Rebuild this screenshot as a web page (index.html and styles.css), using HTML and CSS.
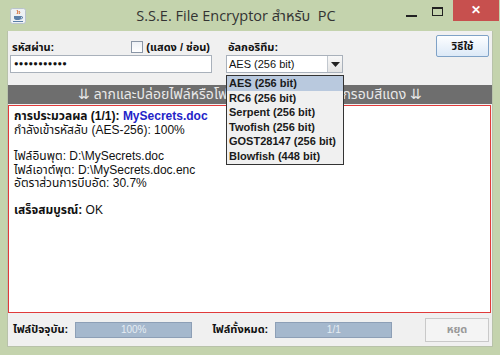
FILE: index.html
```html
<!DOCTYPE html>
<html lang="th">
<head>
  <meta charset="UTF-8">
  <meta name="viewport" content="width=device-width, initial-scale=1.0">
  <title>S.S.E. File Encryptor สำหรับ PC</title>
  <link rel="stylesheet" href="styles.css">
</head>
<body>
  <div class="window">
    <div class="titlebar">
      <div class="app-icon">
        <svg width="16" height="16" viewBox="0 0 16 16">
          <rect x="0.5" y="0.5" width="15" height="15" rx="2" fill="#eef1f4" stroke="#b9c3cc"/>
          <path d="M7 2 q2 2 0 4 M9 3 q1.5 1.5 0 3" stroke="#d2642a" stroke-width="1" fill="none"/>
          <path d="M4 8 h7 v2 q0 2 -3.5 2 q-3.5 0 -3.5 -2z" fill="#5b7fa8"/>
          <path d="M11 8.5 q2 0 1.5 1.5 q-0.5 1 -2 1" stroke="#5b7fa8" fill="none"/>
          <path d="M3 13.5 h10" stroke="#5b7fa8"/>
        </svg>
      </div>
      <div class="title">S.S.E. File Encryptor สำหรับ&nbsp; PC</div>
      <div class="controls">
        <span class="ctl-min"></span>
        <span class="ctl-max"></span>
        <span class="ctl-close">✕</span>
      </div>
    </div>

    <div class="content">
      <div class="top">
        <div class="pw-col">
          <div class="field-head">
            <span class="label">รหัสผ่าน:</span>
            <span class="show-toggle"><span class="checkbox"></span>(แสดง / ซ่อน)</span>
          </div>
          <div class="textbox">●●●●●●●●●●●</div>
        </div>

        <div class="algo-col">
          <div class="field-head">
            <span class="label">อัลกอริทึม:</span>
          </div>
          <div class="combo">
            <span class="combo-value">AES (256 bit)</span>
            <span class="combo-arrow">
              <svg width="9" height="5" viewBox="0 0 9 5"><path d="M0 0 h9 l-4.5 5z" fill="#222"/></svg>
            </span>
            <ul class="combo-list">
              <li class="selected">AES (256 bit)</li>
              <li>RC6 (256 bit)</li>
              <li>Serpent (256 bit)</li>
              <li>Twofish (256 bit)</li>
              <li>GOST28147 (256 bit)</li>
              <li>Blowfish (448 bit)</li>
            </ul>
          </div>
        </div>

        <button class="help-btn">วิธีใช้</button>
      </div>

      <div class="banner">⇊ ลากและปล่อยไฟล์หรือโฟลเดอร์ลงในพื้นที่ล้อมกรอบสีแดง ⇊</div>

      <div class="dropzone">
        <p><b>การประมวลผล (1/1): <span class="file">MySecrets.doc</span></b></p>
        <p>กำลังเข้ารหัสลับ (AES-256): 100%</p>
        <p class="gap">ไฟล์อินพุต: D:\MySecrets.doc</p>
        <p>ไฟล์เอาต์พุต: D:\MySecrets.doc.enc</p>
        <p>อัตราส่วนการบีบอัด: 30.7%</p>
        <p class="gap"><b>เสร็จสมบูรณ์:</b> OK</p>
      </div>

      <div class="bottom">
        <span class="label">ไฟล์ปัจจุบัน:</span>
        <div class="progress">100%</div>
        <span class="label total">ไฟล์ทั้งหมด:</span>
        <div class="progress">1/1</div>
        <button class="stop-btn" disabled>หยุด</button>
      </div>
    </div>
  </div>
</body>
</html>
```

FILE: styles.css
```css
body {
  margin: 0;
  font-family: "Liberation Sans", "Noto Sans Thai", "Loma", "Garuda", "Norasi", sans-serif;
  font-size: 12px;
  color: #111;
}
.window {
  width: 500px;
  height: 355px;
  box-sizing: border-box;
  background: #c4d3ad;
  padding: 0 7px 8px 7px;
  display: flex;
  flex-direction: column;
}
.titlebar {
  height: 31px;
  display: flex;
  align-items: flex-start;
  position: relative;
}
.app-icon {
  margin: 8px 0 0 3px;
  width: 16px;
  height: 16px;
}
.title {
  flex: 1;
  text-align: center;
  font-family: "Open Sans", "Noto Sans", "Noto Sans Thai", sans-serif;
  font-size: 14.5px;
  color: #333;
  padding-top: 6px;
  margin-left: 40px;
}
.controls {
  display: flex;
  align-items: flex-start;
  margin-right: -6px;
}
.ctl-min {
  width: 11px;
  height: 2px;
  background: #222;
  margin: 15px 15px 0 0;
}
.ctl-max {
  width: 9px;
  height: 6px;
  border: 1px solid #222;
  border-top-width: 2px;
  margin: 7px 10px 0 0;
}
.ctl-close {
  width: 46px;
  height: 21px;
  background: #c7504e;
  color: #fff;
  font-size: 12px;
  font-weight: bold;
  text-align: center;
  line-height: 20px;
}
.content {
  flex: 1;
  background: #f0f0f0;
  display: flex;
  flex-direction: column;
  border: 1px solid #b8c2aa;
  border-top: none;
}
.top {
  display: flex;
  align-items: flex-start;
  padding: 8px 3px 0 2px;
  height: 46px;
}
.field-head {
  height: 16px;
  display: flex;
  align-items: center;
  justify-content: space-between;
  padding: 0 2px;
}
.label {
  font-weight: bold;
  font-size: 11px;
}
.show-toggle {
  display: flex;
  align-items: center;
  font-weight: bold;
  font-size: 11px;
}
.checkbox {
  width: 10px;
  height: 10px;
  border: 1px solid #8a96a6;
  background: linear-gradient(#eef1f5, #fff);
  margin-right: 3px;
}
.pw-col {
  width: 202px;
}
.textbox {
  height: 18px;
  box-sizing: border-box;
  border: 1px solid #a9b1bb;
  background: #fff;
  font-size: 7.5px;
  line-height: 16px;
  padding-left: 3px;
  letter-spacing: 0.3px;
}
.algo-col {
  width: 117px;
  margin-left: 14px;
}
.combo {
  position: relative;
  height: 18px;
  box-sizing: border-box;
  border: 1px solid #a9b1bb;
  background: #fff;
  display: flex;
}
.combo-value {
  flex: 1;
  font-size: 11px;
  line-height: 16px;
  padding-left: 2px;
}
.combo-arrow {
  width: 14px;
  border-left: 1px solid #c2c8cf;
  background: linear-gradient(#f8f8f8, #e4e4e4);
  display: flex;
  align-items: center;
  justify-content: center;
}
.combo-list {
  position: absolute;
  top: 19px;
  left: -1px;
  width: 116px;
  margin: 0;
  padding: 0;
  list-style: none;
  background: #f0f0f0;
  border: 1px solid #333;
  z-index: 2;
}
.combo-list li {
  height: 14.6px;
  line-height: 14.6px;
  font-size: 11px;
  font-weight: bold;
  padding-left: 2px;
  color: #1a1a1a;
}
.combo-list li.selected {
  background: #b9c9de;
}
.help-btn {
  margin: -4px 0 0 auto;
  width: 53px;
  height: 22px;
  border: 1px solid #7fa2c7;
  border-radius: 2px;
  background: linear-gradient(#fdfeff, #dce9f7);
  font-family: inherit;
  font-size: 11px;
  font-weight: bold;
  color: #111;
  padding: 0;
}
.banner {
  height: 19px;
  background: #6e6e6e;
  color: #e9e9e9;
  font-size: 14px;
  line-height: 19px;
  text-align: center;
  white-space: nowrap;
  overflow: hidden;
}
.dropzone {
  flex: 1;
  margin: 1px 1px 0 0;
  border: 1px solid #e03a3a;
  background: #fff;
  padding: 4px 5px;
}
.dropzone p {
  margin: 0;
  line-height: 13.5px;
}
.dropzone p.gap {
  margin-top: 13px;
}
.file {
  color: #2424c8;
}
.bottom {
  height: 33px;
  display: flex;
  align-items: center;
  padding: 0 3px 0 5px;
}
.progress {
  width: 117px;
  height: 16px;
  box-sizing: border-box;
  border: 1px solid #8d9fb6;
  background: #a5b8cd;
  color: #e6edf4;
  font-size: 10px;
  line-height: 14px;
  text-align: center;
  margin-left: 7px;
}
.total {
  margin-left: 20px;
}
.stop-btn {
  margin-left: auto;
  width: 64px;
  height: 24px;
  border: 1px solid #c9c9c9;
  background: #f4f4f4;
  color: #9a9a9a;
  font-family: inherit;
  font-size: 11px;
  font-weight: bold;
}
```
